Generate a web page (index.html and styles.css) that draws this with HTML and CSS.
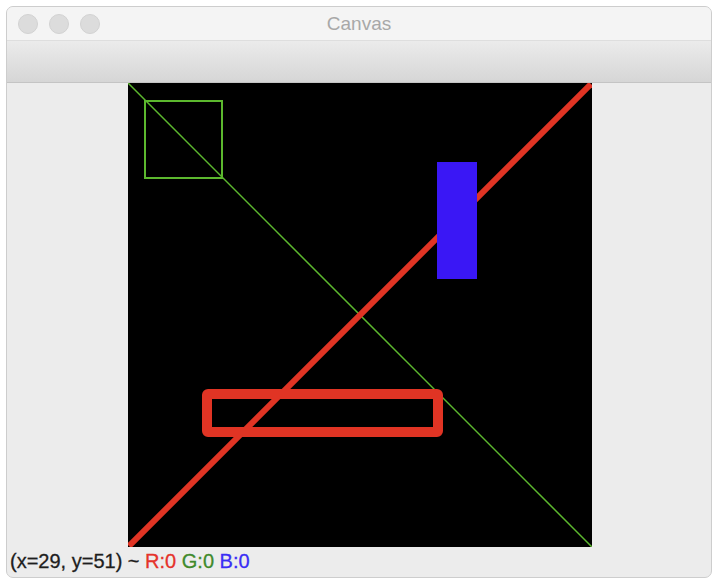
FILE: index.html
```html
<!DOCTYPE html>
<html>
<head>
<meta charset="utf-8">
<link rel="stylesheet" href="styles.css">
</head>
<body>
<div class="window">
  <div class="titlebar">
    <div class="lights">
      <span class="light"></span><span class="light"></span><span class="light"></span>
    </div>
    <div class="title">Canvas</div>
  </div>
  <div class="toolbar"></div>
  <div class="content">
    <div class="canvas">
      <svg width="464" height="464" viewBox="0 0 464 464">
        <rect x="0" y="0" width="464" height="464" fill="#000"/>
        <line x1="0" y1="0" x2="464" y2="464" stroke="#5cb82e" stroke-width="1.5"/>
        <rect x="17" y="18" width="77" height="77" fill="none" stroke="#5cb82e" stroke-width="2"/>
        <line x1="1" y1="463" x2="463" y2="1" stroke="#e03424" stroke-width="6"/>
        <rect x="309" y="79" width="40" height="117" fill="#3a17f5"/>
        <rect x="79" y="311" width="231" height="38" rx="1" fill="none" stroke="#e03424" stroke-width="10" stroke-linejoin="round"/>
      </svg>
    </div>
    <div class="status">(x=29, y=51) ~ <span class="r">R:0</span> <span class="g">G:0</span> <span class="b">B:0</span></div>
  </div>
</div>
</body>
</html>
```
FILE: styles.css
```css
html, body {
  margin: 0;
  padding: 0;
  background: #ffffff;
}
body {
  padding: 6px 0 0 6px;
  font-family: "Liberation Sans", Arial, sans-serif;
}
.window {
  width: 706px;
  height: 572px;
  box-sizing: border-box;
  border: 1px solid #cdcdcd;
  border-radius: 7px;
  background: #ececec;
  overflow: hidden;
  display: flex;
  flex-direction: column;
}
.titlebar {
  height: 33px;
  background: #f4f4f4;
  border-bottom: 1px solid #dedede;
  display: flex;
  align-items: center;
  position: relative;
}
.lights {
  display: flex;
  gap: 11px;
  padding-left: 11px;
}
.light {
  width: 20px;
  height: 20px;
  border-radius: 50%;
  background: #dcdcdc;
  border: 0.5px solid #d2d2d2;
  box-sizing: border-box;
}
.title {
  position: absolute;
  left: 0;
  right: 0;
  top: 0;
  line-height: 34px;
  text-align: center;
  font-size: 19px;
  color: #a8a8a8;
}
.toolbar {
  height: 41px;
  background: linear-gradient(#ebebeb, #d6d6d6);
  border-bottom: 1px solid #c4c4c4;
}
.content {
  flex: 1;
  display: flex;
  flex-direction: column;
}
.canvas {
  align-self: center;
  width: 464px;
  height: 464px;
  margin-left: 1px;
}
.canvas svg {
  display: block;
}
.status {
  padding: 3px 0 0 3px;
  font-size: 20px;
  color: #1e1e1e;
  line-height: 22px;
  -webkit-text-stroke: 0.3px currentColor;
}
.r { color: #e5322a; }
.g { color: #3f8a2c; }
.b { color: #3a2ef5; }
```
